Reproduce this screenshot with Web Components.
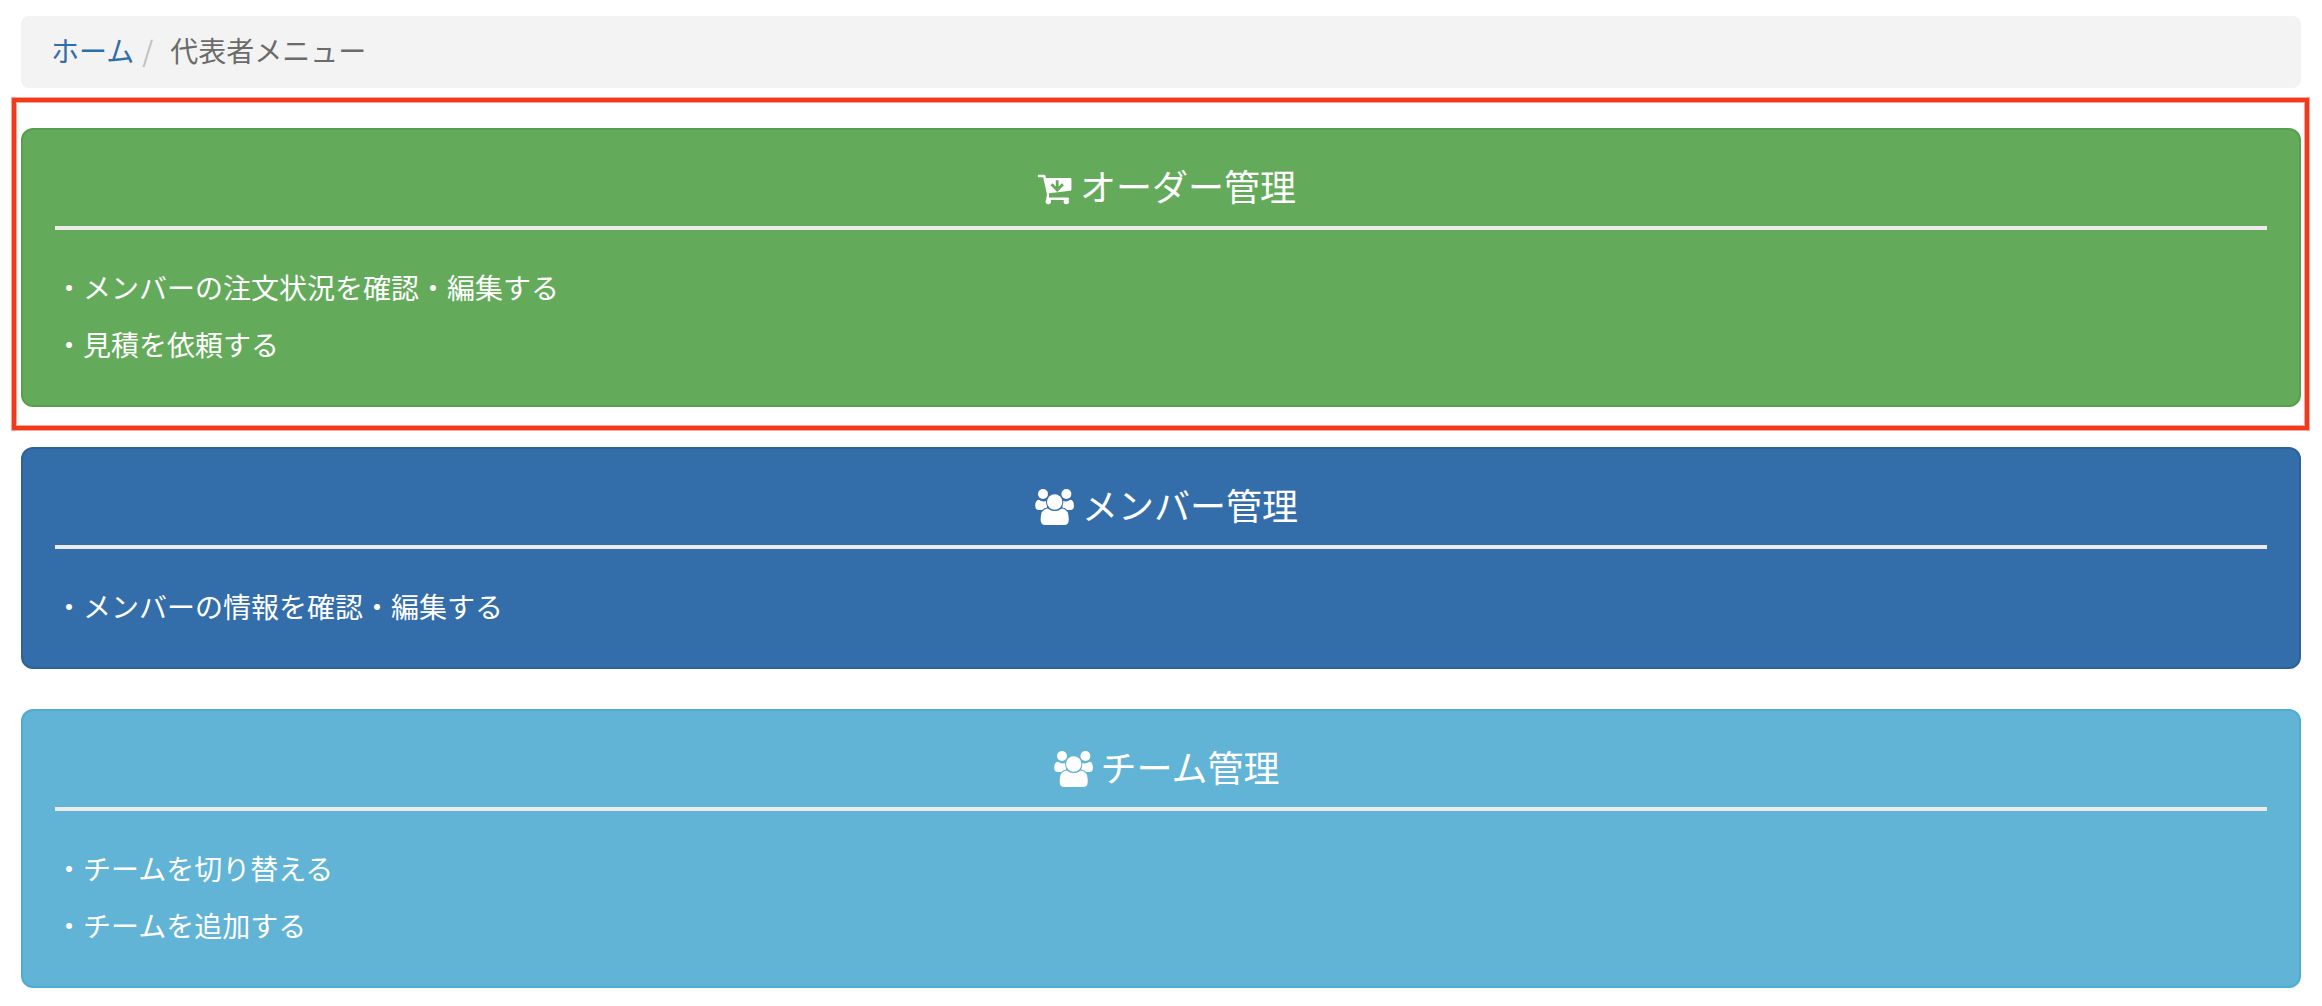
<!DOCTYPE html>
<html lang="ja">
<head>
<meta charset="utf-8">
<title>代表者メニュー</title>
<style>
  body {
    margin: 0;
    background: #fff;
    font-family: "Noto Sans CJK JP", sans-serif;
    font-size: 28px;
    line-height: 40px;
  }
</style>
</head>
<body>
<menu-page>
  <bread-crumb>
    <crumb-item href="#home">ホーム</crumb-item>
    <crumb-item>代表者メニュー</crumb-item>
  </bread-crumb>
  <menu-card tone="green" icon="cart" heading="オーダー管理" marked>
    <menu-line>・メンバーの注文状況を確認・編集する</menu-line>
    <menu-line>・見積を依頼する</menu-line>
  </menu-card>
  <menu-card tone="blue" icon="users" heading="メンバー管理">
    <menu-line>・メンバーの情報を確認・編集する</menu-line>
  </menu-card>
  <menu-card tone="cyan" icon="users" heading="チーム管理">
    <menu-line>・チームを切り替える</menu-line>
    <menu-line>・チームを追加する</menu-line>
  </menu-card>
</menu-page>
<script>
  const attach = (el, html) => { el.attachShadow({ mode: 'open' }).innerHTML = html; };

  customElements.define('menu-page', class extends HTMLElement {
    constructor() {
      super();
      attach(this, `
        <style>
          :host { display: block; }
          main { display: flex; flex-direction: column; gap: 40px; padding: 16px 21px 18px; }
        </style>
        <main><slot></slot></main>`);
    }
  });

  customElements.define('bread-crumb', class extends HTMLElement {
    constructor() {
      super();
      attach(this, `
        <style>
          :host { display: block; }
          nav { display: flex; padding: 14px 30px 18px; border-radius: 8px; background: #f3f3f3; }
        </style>
        <nav aria-label="パンくず"><slot></slot></nav>`);
    }
  });

  customElements.define('crumb-item', class extends HTMLElement {
    connectedCallback() {
      if (this.shadowRoot) return;
      const href = this.getAttribute('href');
      attach(this, `
        <style>
          :host { display: block; line-height: 40px; color: #6b6b6b; }
          a { color: #2f6eab; text-decoration: none; }
          .sep { padding: 0 17px 0 8px; color: #bfbfbf; }
        </style>
        ${href ? `<a href="${href}"><slot></slot></a>` : `<span class="sep">/</span><slot></slot>`}`);
    }
  });

  customElements.define('menu-icon', class extends HTMLElement {
    connectedCallback() {
      if (this.shadowRoot) return;
      const icons = {
        cart: `<svg width="36" height="36" viewBox="0 0 36 36" aria-hidden="true">
          <g fill="currentColor">
          <path d="M2.800 4.700H8.300Q9.200 4.700 9.400 5.600L9.900 8H34.300Q35.400 8 35.400 9.100V19.600Q35.400 20.600 34.300 20.700L13 23.200L12.900 27.400H32Q33 27.400 33 28.700Q33 30 32 30H11Q10 30 10.200 28.800L11 24.500L7.200 7.300H2.800Q1.800 7.300 1.800 6Q1.800 4.700 2.800 4.700Z"/>
          <circle cx="12.300" cy="31.600" r="2.700"/><circle cx="30.300" cy="31.600" r="2.700"/></g>
          <path d="M21.200 10.300V19.500M15.500 14.300L21.200 20L26.900 14.300" fill="none" stroke="var(--tone)" stroke-width="2.800"/></svg>`,
        users: `<svg width="40" height="36" viewBox="0 0 40 36" aria-hidden="true">
          <g fill="currentColor"><circle cx="9" cy="5" r="5"/><circle cx="32.400" cy="5" r="5"/>
          <path d="M5 10.800Q9 13.600 13 11.500V21H5Q1.200 21 1.200 17Q1.200 11 5 10.800Z"/>
          <path d="M36.400 10.800Q32.400 13.600 28.400 11.500V21H36.400Q39.900 21 39.900 17Q39.900 11 36.400 10.800Z"/></g>
          <g fill="currentColor" stroke="var(--tone)" stroke-width="2" paint-order="stroke">
          <path d="M13.500 19.500Q20.700 24.500 28 19.500Q34.800 20 34.800 30.500Q34.800 36 30 36H11.500Q6.600 36 6.600 30.500Q6.600 20 13.500 19.500Z"/>
          <circle cx="20.700" cy="13" r="7.700"/></g></svg>`
      };
      attach(this, `<style>:host { display: block; } svg { display: block; }</style>${icons[this.getAttribute('name')]}`);
    }
  });

  customElements.define('menu-card', class extends HTMLElement {
    connectedCallback() {
      if (this.shadowRoot) return;
      attach(this, `
        <style>
          :host { display: block; position: relative; color: #fff; }
          :host([tone="green"]) { --tone: #64aa5b; --edge: #56a04c; }
          :host([tone="blue"]) { --tone: #346eaa; --edge: #2d6298; }
          :host([tone="cyan"]) { --tone: #61b4d5; --edge: #4facd2; }
          a {
            display: block; padding: 32px; border: 2px solid var(--edge); border-radius: 12px;
            background: var(--tone); color: inherit; text-decoration: none;
          }
          h2 {
            display: flex; align-items: center; justify-content: center; gap: 8px;
            margin: 0 0 29px; padding: 0 0 18px 10px; border-bottom: 4px solid #ebebeb;
            font-size: 36px; line-height: 46px; font-weight: 400;
          }
          menu-icon { margin-top: 6px; }
          .mark {
            position: absolute; inset: -30px -8px -23px -9px; border: 4px solid #f03a1e;
            box-shadow: 0 0 0 1px #f8a595, inset 0 0 0 1px #f8a595; pointer-events: none;
          }
        </style>
        <a href="#${this.getAttribute('tone')}">
          <h2><menu-icon name="${this.getAttribute('icon')}"></menu-icon><span>${this.getAttribute('heading')}</span></h2>
          <slot></slot>
        </a>
        ${this.hasAttribute('marked') ? '<div class="mark"></div>' : ''}`);
    }
  });

  customElements.define('menu-line', class extends HTMLElement {
    constructor() {
      super();
      attach(this, `<style>:host { display: block; line-height: 57px; }</style><slot></slot>`);
    }
  });
</script>
</body>
</html>
